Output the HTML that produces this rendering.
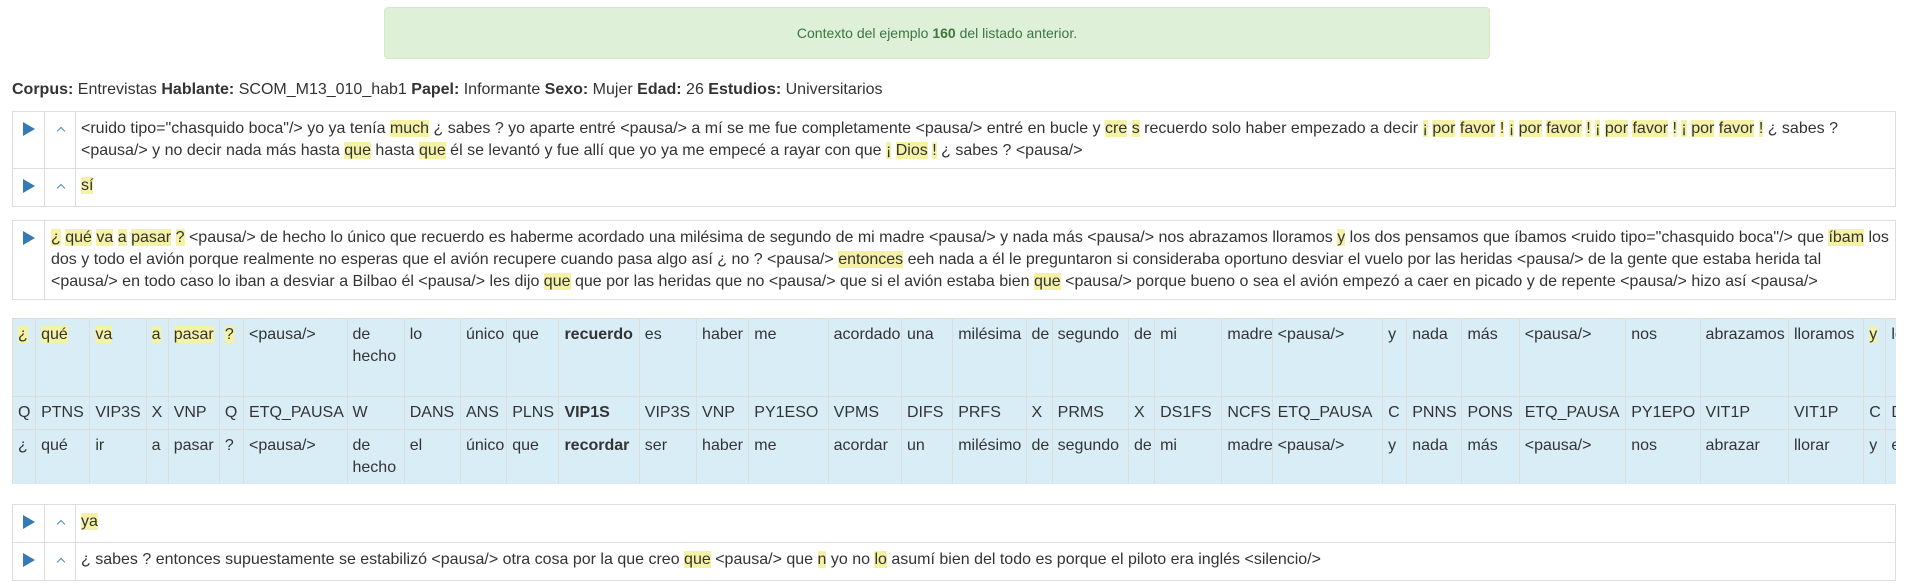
<!DOCTYPE html>
<html><head><meta charset="utf-8"><style>
*{box-sizing:border-box;margin:0;padding:0}
body{width:1909px;height:583px;overflow:hidden;background:#fff;font-family:"Liberation Sans",Arial,sans-serif;font-size:16px;color:#333;position:relative}
.alert{position:absolute;left:384px;top:7px;width:1106px;height:52px;background:#dff0d8;border:1px solid #d6e9c6;border-radius:4px;color:#3c763d;font-size:14px;text-align:center;line-height:50px}
.meta{position:absolute;left:12px;top:79px;line-height:22px;white-space:nowrap}
.box{position:absolute;left:12px;width:1884px;border-collapse:collapse;table-layout:fixed}
.box td{border:1px solid #ddd;vertical-align:top;padding:6px 5px;line-height:22px;white-space:nowrap;overflow:hidden}
.h{background:#f5f2a6}
.play{display:inline-block;width:0;height:0;border-left:12px solid #337ab7;border-top:7px solid transparent;border-bottom:7px solid transparent;margin:4px 0 0 5px}
.car{display:block;width:8px;height:8px;border-left:1.5px solid #4a8ac4;border-top:1.5px solid #4a8ac4;transform:rotate(45deg);margin:10px 0 0 8px;transform-origin:center;width:6px;height:6px}
.tw{position:absolute;left:12px;top:318px;width:1884px;height:166px;overflow:hidden}
.tw table{border-collapse:collapse;table-layout:fixed;width:1945px;background:#d9edf7}
.tw td{border:1px solid #ddd;vertical-align:top;padding:5px 5px;line-height:22px;overflow:hidden;white-space:nowrap}
.tw td.w{white-space:normal}
</style></head><body>
<div class="alert">Contexto del ejemplo <b>160</b> del listado anterior.</div>
<div class="meta"><b>Corpus:</b> Entrevistas <b>Hablante:</b> SCOM_M13_010_hab1 <b>Papel:</b> Informante <b>Sexo:</b> Mujer <b>Edad:</b> 26 <b>Estudios:</b> Universitarios</div>

<table class="box" style="top:111px"><colgroup><col style="width:32px"><col style="width:31px"><col></colgroup>
<tr style="height:55px"><td><span class="play"></span></td><td><span class="car"></span></td><td>&lt;ruido tipo="chasquido boca"/&gt; yo ya tenía <span class="h">much</span> ¿ sabes ? yo aparte entré &lt;pausa/&gt; a mí se me fue completamente &lt;pausa/&gt; entré en bucle y <span class="h">cre</span> <span class="h">s</span> recuerdo solo haber empezado a decir <span class="h">¡</span> <span class="h">por</span> <span class="h">favor</span> <span class="h">!</span> <span class="h">¡</span> <span class="h">por</span> <span class="h">favor</span> <span class="h">!</span> <span class="h">¡</span> <span class="h">por</span> <span class="h">favor</span> <span class="h">!</span> <span class="h">¡</span> <span class="h">por</span> <span class="h">favor</span> <span class="h">!</span> ¿ sabes ?<br>&lt;pausa/&gt; y no decir nada más hasta <span class="h">que</span> hasta <span class="h">que</span> él se levantó y fue allí que yo ya me empecé a rayar con que <span class="h">¡</span> <span class="h">Dios</span> <span class="h">!</span> ¿ sabes ? &lt;pausa/&gt;</td></tr>
<tr style="height:33px"><td><span class="play"></span></td><td><span class="car"></span></td><td><span class="h">sí</span></td></tr>
</table>

<table class="box" style="top:220px"><colgroup><col style="width:32px"><col></colgroup>
<tr style="height:77px"><td><span class="play"></span></td><td style="padding-left:6px"><span class="h">¿</span> <span class="h">qué</span> <span class="h">va</span> <span class="h">a</span> <span class="h">pasar</span> <span class="h">?</span> &lt;pausa/&gt; de hecho lo único que recuerdo es haberme acordado una milésima de segundo de mi madre &lt;pausa/&gt; y nada más &lt;pausa/&gt; nos abrazamos lloramos <span class="h">y</span> los dos pensamos que íbamos &lt;ruido tipo="chasquido boca"/&gt; que <span class="h">íbam</span> los<br>dos y todo el avión porque realmente no esperas que el avión recupere cuando pasa algo así ¿ no ? &lt;pausa/&gt; <span class="h">entonces</span> eeh nada a él le preguntaron si consideraba oportuno desviar el vuelo por las heridas &lt;pausa/&gt; de la gente que estaba herida tal<br>&lt;pausa/&gt; en todo caso lo iban a desviar a Bilbao él &lt;pausa/&gt; les dijo <span class="h">que</span> que por las heridas que no &lt;pausa/&gt; que si el avión estaba bien <span class="h">que</span> &lt;pausa/&gt; porque bueno o sea el avión empezó a caer en picado y de repente &lt;pausa/&gt; hizo así &lt;pausa/&gt;</td></tr>
</table>

<div class="tw"><table>
<colgroup><col style="width:23px"><col style="width:54px"><col style="width:56px"><col style="width:22px"><col style="width:51px"><col style="width:24px"><col style="width:103px"><col style="width:57px"><col style="width:56px"><col style="width:46px"><col style="width:52px"><col style="width:80px"><col style="width:57px"><col style="width:52px"><col style="width:79px"><col style="width:73px"><col style="width:51px"><col style="width:73px"><col style="width:26px"><col style="width:76px"><col style="width:26px"><col style="width:67px"><col style="width:50px"><col style="width:110px"><col style="width:24px"><col style="width:55px"><col style="width:57px"><col style="width:106px"><col style="width:74px"><col style="width:88px"><col style="width:75px"><col style="width:22px"><col style="width:70px"></colgroup>
<tr style="height:78px"><td><span class="h">¿</span></td><td><span class="h">qué</span></td><td><span class="h">va</span></td><td><span class="h">a</span></td><td><span class="h">pasar</span></td><td><span class="h">?</span></td><td>&lt;pausa/&gt;</td><td class="w">de hecho</td><td>lo</td><td>único</td><td>que</td><td><b>recuerdo</b></td><td>es</td><td>haber</td><td>me</td><td>acordado</td><td>una</td><td>milésima</td><td>de</td><td>segundo</td><td>de</td><td>mi</td><td>madre</td><td>&lt;pausa/&gt;</td><td>y</td><td>nada</td><td>más</td><td>&lt;pausa/&gt;</td><td>nos</td><td>abrazamos</td><td>lloramos</td><td><span class="h">y</span></td><td>los</td></tr>
<tr style="height:32px"><td>Q</td><td>PTNS</td><td>VIP3S</td><td>X</td><td>VNP</td><td>Q</td><td>ETQ_PAUSA</td><td>W</td><td>DANS</td><td>ANS</td><td>PLNS</td><td><b>VIP1S</b></td><td>VIP3S</td><td>VNP</td><td>PY1ESO</td><td>VPMS</td><td>DIFS</td><td>PRFS</td><td>X</td><td>PRMS</td><td>X</td><td>DS1FS</td><td>NCFS</td><td>ETQ_PAUSA</td><td>C</td><td>PNNS</td><td>PONS</td><td>ETQ_PAUSA</td><td>PY1EPO</td><td>VIT1P</td><td>VIT1P</td><td>C</td><td>DAMP</td></tr>
<tr style="height:55px"><td>¿</td><td>qué</td><td>ir</td><td>a</td><td>pasar</td><td>?</td><td>&lt;pausa/&gt;</td><td class="w">de hecho</td><td>el</td><td>único</td><td>que</td><td><b>recordar</b></td><td>ser</td><td>haber</td><td>me</td><td>acordar</td><td>un</td><td>milésimo</td><td>de</td><td>segundo</td><td>de</td><td>mi</td><td>madre</td><td>&lt;pausa/&gt;</td><td>y</td><td>nada</td><td>más</td><td>&lt;pausa/&gt;</td><td>nos</td><td>abrazar</td><td>llorar</td><td>y</td><td>el</td></tr>
</table></div>

<table class="box" style="top:504px"><colgroup><col style="width:32px"><col style="width:31px"><col></colgroup>
<tr style="height:33px"><td><span class="play"></span></td><td><span class="car"></span></td><td><span class="h">ya</span></td></tr>
<tr style="height:33px"><td><span class="play"></span></td><td><span class="car"></span></td><td>¿ sabes ? entonces supuestamente se estabilizó &lt;pausa/&gt; otra cosa por la que creo <span class="h">que</span> &lt;pausa/&gt; que <span class="h">n</span> yo no <span class="h">lo</span> asumí bien del todo es porque el piloto era inglés &lt;silencio/&gt;</td></tr>
</table>
</body></html>
